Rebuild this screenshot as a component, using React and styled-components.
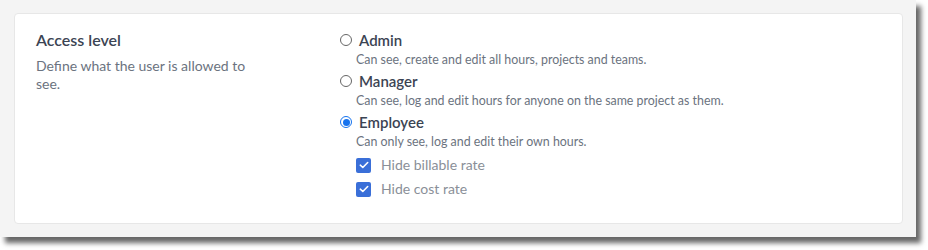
import React, { useState } from 'react';
import styled, { createGlobalStyle } from 'styled-components';

const GlobalStyle = createGlobalStyle`
  body {
    margin: 0;
    min-height: 250px;
    background: #ffffff;
    font-family: Lato, "Open Sans", sans-serif;
  }
`;

const options = [
  { id: 'admin', label: 'Admin', desc: 'Can see, create and edit all hours, projects and teams.' },
  { id: 'manager', label: 'Manager', desc: 'Can see, log and edit hours for anyone on the same project as them.' },
  { id: 'employee', label: 'Employee', desc: 'Can only see, log and edit their own hours.' },
];

const App = () => {
  const [level, setLevel] = useState('employee');
  const [hideBillable, setHideBillable] = useState(true);
  const [hideCost, setHideCost] = useState(true);

  return (
    <>
      <GlobalStyle />
      <Page>
        <Frame>
          <Card>
            <Intro>
              <Title>Access level</Title>
              <Desc>Define what the user is allowed to see.</Desc>
            </Intro>
            <Options>
              {options.map((opt) => (
                <Option key={opt.id}>
                  <RadioRow onClick={() => setLevel(opt.id)}>
                    <Radio checked={level === opt.id} />
                    <OptionLabel>{opt.label}</OptionLabel>
                  </RadioRow>
                  <OptionDesc>{opt.desc}</OptionDesc>
                </Option>
              ))}
              {level === 'employee' && (
                <Checks>
                  <CheckRow onClick={() => setHideBillable(!hideBillable)}>
                    <Check checked={hideBillable} />
                    <CheckLabel>Hide billable rate</CheckLabel>
                  </CheckRow>
                  <CheckRow onClick={() => setHideCost(!hideCost)}>
                    <Check checked={hideCost} />
                    <CheckLabel>Hide cost rate</CheckLabel>
                  </CheckRow>
                </Checks>
              )}
            </Options>
          </Card>
        </Frame>
      </Page>
    </>
  );
};

const Radio = ({ checked }) => (
  <RadioBox checked={checked}>{checked && <RadioDot />}</RadioBox>
);

const Check = ({ checked }) => (
  <CheckBox checked={checked}>
    {checked && (
      <svg width="10" height="8" viewBox="0 0 10 8" fill="none">
        <path d="M1.3 4.2 3.8 6.5 8.7 1.5" stroke="#fff" strokeWidth="1.6" strokeLinecap="round" strokeLinejoin="round" />
      </svg>
    )}
  </CheckBox>
);

export default App;

const Page = styled.div`
  height: 250px;
`;

const Frame = styled.div`
  width: 916px;
  height: 237px;
  box-sizing: border-box;
  padding: 13px 13px 13px 14px;
  background: #f4f4f4;
  box-shadow: 5px 6px 5px rgba(0, 0, 0, 0.6);
`;

const Card = styled.div`
  height: 211px;
  box-sizing: border-box;
  background: #fff;
  border: 1px solid #e7e7e7;
  border-radius: 4px;
  display: grid;
  grid-template-columns: 304px 1fr;
  padding: 16px 21px;
`;

const Intro = styled.div`
  display: flex;
  flex-direction: column;
`;

const Title = styled.div`
  font-size: 16px;
  font-weight: 600;
  color: #3b4453;
  line-height: 20px;
`;

const Desc = styled.div`
  margin-top: 7px;
  max-width: 230px;
  font-size: 14px;
  line-height: 18px;
  color: #6b7380;
`;

const Options = styled.div`
  display: flex;
  flex-direction: column;
`;

const Option = styled.div`
  display: flex;
  flex-direction: column;
  margin-bottom: 3px;
`;

const RadioRow = styled.div`
  display: flex;
  align-items: center;
  gap: 7px;
  cursor: pointer;
`;

const RadioBox = styled.span`
  width: 12px;
  height: 12px;
  box-sizing: border-box;
  border-radius: 50%;
  border: 1px solid ${(p) => (p.checked ? '#1673ee' : '#666')};
  display: flex;
  align-items: center;
  justify-content: center;
  background: #fff;
`;

const RadioDot = styled.span`
  width: 7px;
  height: 7px;
  border-radius: 50%;
  background: #1673ee;
`;

const OptionLabel = styled.span`
  font-size: 15px;
  font-weight: 600;
  color: #3b4453;
  line-height: 20px;
`;

const OptionDesc = styled.div`
  margin-top: 2px;
  margin-left: 16px;
  font-size: 12.4px;
  line-height: 16px;
  color: #6b7380;
`;

const Checks = styled.div`
  display: flex;
  flex-direction: column;
  gap: 8px;
  margin-left: 16px;
  margin-top: 4px;
`;

const CheckRow = styled.div`
  display: flex;
  align-items: center;
  gap: 10px;
  cursor: pointer;
`;

const CheckBox = styled.span`
  width: 15px;
  height: 15px;
  border-radius: 2px;
  background: ${(p) => (p.checked ? '#3a6fd8' : '#fff')};
  border: ${(p) => (p.checked ? 'none' : '1px solid #999')};
  display: flex;
  align-items: center;
  justify-content: center;
`;

const CheckLabel = styled.span`
  font-size: 14px;
  line-height: 16px;
  color: #8a8f98;
`;
